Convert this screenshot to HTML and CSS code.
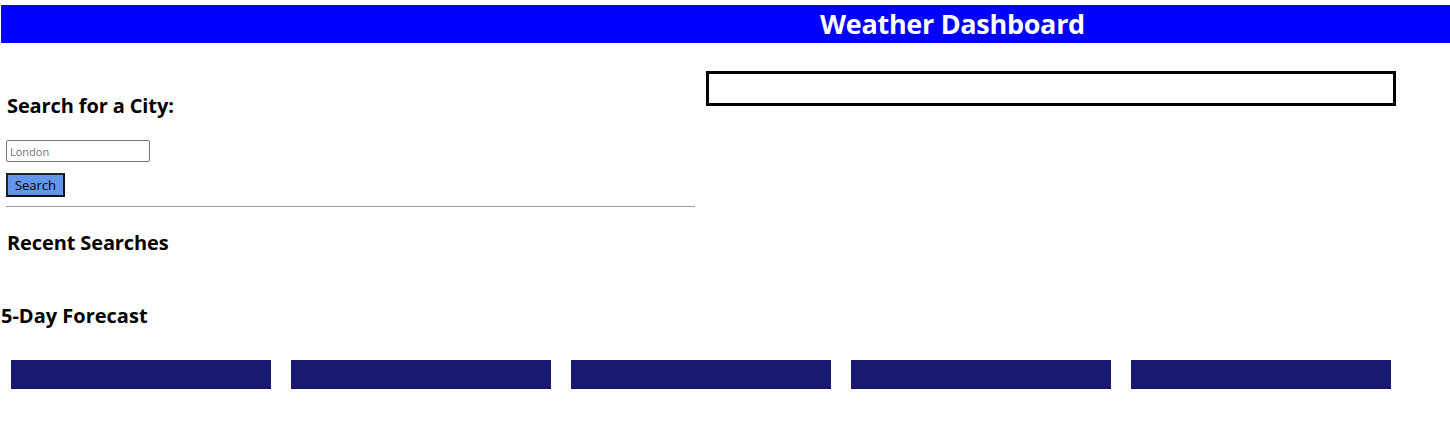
FILE: index.html
```html
<!DOCTYPE html>
<html lang="en">
<head>
<meta charset="utf-8">
<title>Weather Dashboard</title>
<link rel="stylesheet" href="styles.css">
</head>
<body>
<header class="top-bar">
  <h1 class="title">Weather Dashboard</h1>
</header>
<main class="main">
  <section class="sidebar">
    <h3 class="side-heading search-heading">Search for a City:</h3>
    <input class="city-input" type="text" placeholder="London">
    <button class="search-btn" type="button">Search</button>
    <hr class="divider">
    <h3 class="side-heading recent-heading">Recent Searches</h3>
  </section>
  <section class="current">
    <div class="current-box"></div>
  </section>
</main>
<section class="forecast">
  <h3 class="forecast-heading">5-Day Forecast</h3>
  <div class="cards">
    <div class="card"></div>
    <div class="card"></div>
    <div class="card"></div>
    <div class="card"></div>
    <div class="card"></div>
  </div>
</section>
</body>
</html>
```

FILE: styles.css
```css
* { box-sizing: border-box; }
body {
  margin: 0;
  padding: 5px 0 0 1px;
  font-family: "Open Sans", "Noto Sans", sans-serif;
  color: #000;
  background: #fff;
}
.top-bar {
  background: #0000ff;
  height: 38px;
  display: flex;
  align-items: center;
  padding-left: 819px;
}
.title {
  margin: 0;
  color: #fff;
  font-size: 27px;
  font-weight: 700;
  line-height: 38px;
  letter-spacing: -0.3px;
}
.main {
  display: flex;
  align-items: flex-start;
  padding-left: 5px;
}
.sidebar {
  width: 689px;
  display: flex;
  flex-direction: column;
  align-items: flex-start;
}
.side-heading {
  margin: 0;
  font-size: 20px;
  font-weight: 700;
  letter-spacing: -0.12px;
  padding-left: 1px;
}
.search-heading { margin-top: 50px; line-height: 26px; }
.city-input {
  margin-top: 21px;
  width: 144px;
  height: 22px;
  border: 1px solid #767676;
  border-radius: 2px;
  padding: 1px 3px;
  font-family: inherit;
  font-size: 11px;
  color: #000;
}
.city-input::placeholder { color: #757575; }
.search-btn {
  margin-top: 11px;
  width: 59px;
  height: 24px;
  background: #6495ed;
  border: 2px solid #111;
  border-color: #222 #111 #111 #222;
  padding: 0;
  font-family: inherit;
  font-size: 13px;
  color: #000;
}
.divider {
  align-self: stretch;
  margin: 9px 0 0 0;
  border: 0;
  border-top: 1px solid #999;
  height: 0;
}
.recent-heading { margin-top: 23px; line-height: 26px; }
.current {
  margin-left: 11px;
  padding-top: 28px;
}
.current-box {
  width: 690px;
  height: 35px;
  border: 3px solid #000;
}
.forecast { margin-top: 47px; }
.forecast-heading {
  margin: 0;
  font-size: 20px;
  font-weight: 700;
  line-height: 26px;
}
.cards {
  display: flex;
  gap: 20px;
  padding-left: 10px;
  margin-top: 31px;
}
.card {
  width: 260px;
  height: 29px;
  background: #191970;
}
```
